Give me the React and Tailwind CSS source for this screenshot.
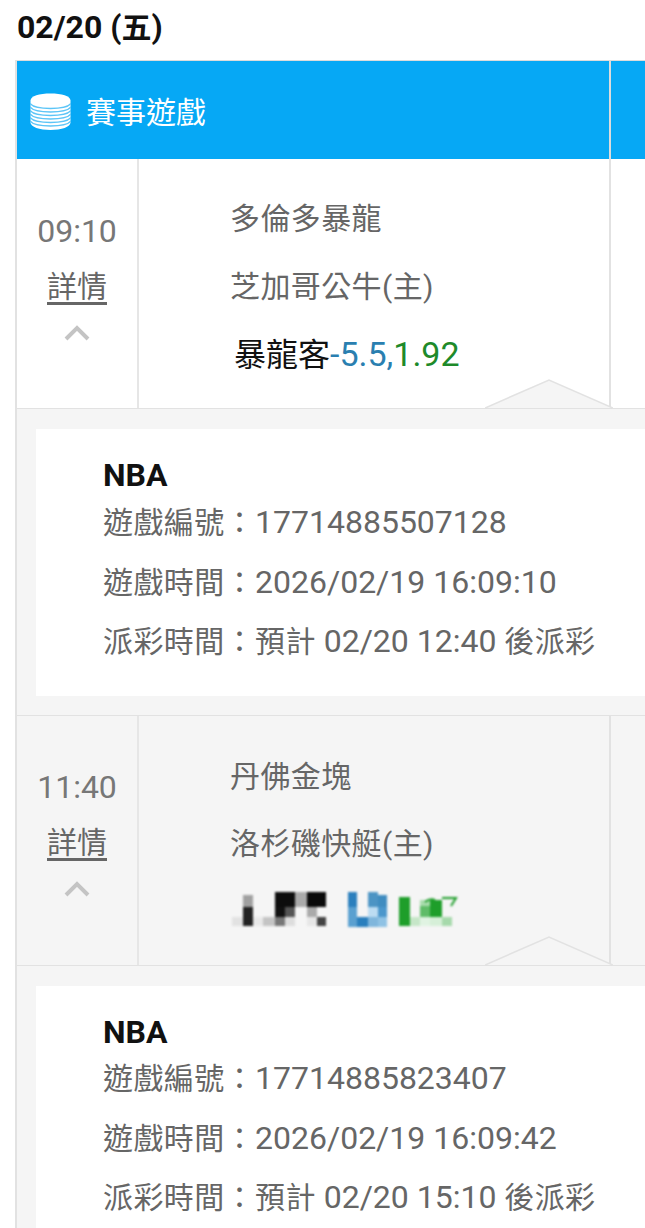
const Coins = () => (
  <svg width="41" height="38" viewBox="0 0 41 38" className="shrink-0">
    <path d="M0.500 7.500C0.500 3 9.500 0.500 20.500 0.500S40.500 3 40.500 7.500V29.500C40.500 34 31.500 37 20.500 37S0.500 34 0.500 29.500Z" fill="#fff" />
    <g fill="none" stroke="#5cc5f7" strokeWidth="1.300">
      <path d="M0 10.500c3 4 10 5 20.500 5s17.500-1 20.500-5" />
      <path d="M0 14c3 4 10 5 20.500 5s17.500-1 20.500-5" />
      <path d="M0 17.500c3 4 10 5 20.500 5s17.500-1 20.500-5" />
      <path d="M0 21c3 4 10 5 20.500 5s17.500-1 20.500-5" />
      <path d="M0 24.500c3 4 10 5 20.500 5s17.500-1 20.500-5" />
      <path d="M0 28c3 4 10 5 20.500 5s17.500-1 20.500-5" />
    </g>
  </svg>
);

const Chevron = () => (
  <svg width="28" height="18" viewBox="0 0 28 18" fill="none">
    <path d="M3 16 14 5l11 11" stroke="#c4c4c4" strokeWidth="4" />
  </svg>
);

const Notch = () => (
  <svg width="128" height="30" viewBox="0 0 128 30" className="absolute right-[-4px] bottom-[-1px]">
    <path d="M0 29 64 1l64 28" fill="#f5f5f5" stroke="#e2e2e2" strokeWidth="1.500" />
  </svg>
);

const L = ({ children }) => <span className="text-[32px] tracking-normal">{children}</span>;

const mosaic = [
  [243, 895, 10, 12, "#a0a0a0"], [243, 907, 10, 19, "#222"],
  [232, 917, 11, 9, "#e2e2e2"], [253, 917, 10, 9, "#e8e8e8"], [263, 917, 12, 9, "#c4c4c4"],
  [275, 892, 20, 15, "#0d0d0d"], [275, 907, 10, 10, "#111"], [285, 907, 10, 10, "#555"],
  [275, 917, 10, 9, "#777"], [285, 917, 10, 9, "#ddd"], [295, 892, 12, 15, "#aaa"],
  [307, 892, 19, 15, "#0a0a0a"], [307, 907, 10, 10, "#aaa"], [307, 917, 10, 9, "#e6e6e6"], [317, 917, 9, 9, "#444"],
  [348, 892, 9, 15, "#2a7fbd"], [348, 907, 9, 20, "#5aa0d0"], [357, 917, 11, 10, "#2a7fbd"],
  [368, 892, 10, 15, "#4c94c4"], [378, 895, 9, 12, "#3f8cc0"], [368, 907, 10, 10, "#bcdcf2"],
  [378, 907, 9, 10, "#4b97cc"], [368, 917, 10, 10, "#7fb6dc"], [378, 917, 9, 10, "#8fc2e4"],
  [399, 897, 11, 29, "#1e9e2a"], [410, 917, 10, 9, "#c6e6c8"],
  [420, 900, 10, 6, "#a8dcac"], [420, 906, 10, 11, "#5fbc68"], [430, 900, 12, 17, "#1e9e2a"],
  [420, 917, 10, 9, "#e0f3e2"], [430, 917, 12, 9, "#d6efd8"], [442, 917, 10, 9, "#a6d9ab"],
];

const BlurredBet = () => (
  <svg width="232" height="36" viewBox="230 891 232 36" className="block blur-[1px]">
    {mosaic.map(([x, y, w, h, c], i) => (
      <rect key={i} x={x} y={y} width={w} height={h} fill={c} />
    ))}
    <path d="M425 902q5-4 10-2" stroke="#1e9e2a" strokeWidth="2" fill="none" />
    <path d="M442 898h14l-5 8" stroke="#1e9e2a" strokeWidth="2" fill="none" />
  </svg>
);

function Game({ time, away, home, bet, id, when, pay, blurred, tone, timeTop, awayTop, homeGap, idGap }) {
  return (
    <div>
      <div className={`flex h-[250px] border-b border-[#e2e2e2] ${tone}`}>
        <div className="w-[122px] shrink-0 border-r-2 border-[#e6e6e6] flex flex-col items-center">
          <div className={`${timeTop} text-[30px] leading-[40px] text-[#777]`}><L>{time}</L></div>
          <div className="mt-[15px] text-[30px] leading-[40px] text-[#666] underline underline-offset-[5px]">詳情</div>
          <div className="mt-[16px] flex"><Chevron /></div>
        </div>
        <div className="relative w-[472px] shrink-0 border-r-2 border-[#e2e2e2]">
          <div className={`pl-[91px] ${awayTop} text-[30px] leading-[36px] text-[#666]`}>
            <div className="tracking-[0.4px]">{away}</div>
            <div className={`${homeGap} tracking-[0.4px]`}>{home}(主)</div>
            {blurred ? (
              <div className="mt-[29px]"><BlurredBet /></div>
            ) : (
              <div className="mt-[31px] ml-[4px] text-[32px] text-[#111]">
                {bet[0]}
                <span className="text-[34px] text-[#2a7fb0]">{bet[1]}</span>
                <span className="text-[34px] text-[#1e8a2a]">{bet[2]}</span>
              </div>
            )}
          </div>
          <Notch />
        </div>
        <div className="flex-1" />
      </div>
      <div className="h-[307px] bg-[#f5f5f5] pl-[19px] pt-[20px] border-b border-[#e2e2e2]">
        <div className="h-[267px] bg-white pl-[67px] pt-[28px] text-[30px] text-[#666] tracking-[0.4px]">
          <div className="font-bold text-[32px] text-[#111] leading-[36px] tracking-normal">NBA</div>
          <div className={`leading-[36px] ${idGap}`}>遊戲編號：<L>{id}</L></div>
          <div className="leading-[36px] mt-[23px]">遊戲時間：<L>{when}</L></div>
          <div className="leading-[36px] mt-[22px]">派彩時間：預計 <L>{pay}</L> 後派彩</div>
        </div>
      </div>
    </div>
  );
}

export default function App() {
  return (
    <div className="w-[645px] h-[1228px] overflow-hidden bg-white font-['Roboto','Noto_Sans_CJK_TC',sans-serif]">
      <div className="h-[60px] pl-[17px] pt-[9px] text-[30px] leading-[36px] font-bold text-[#111]"><span className="text-[32px]">02/20 (</span>五<span className="text-[32px]">)</span></div>
      <div className="ml-[15px] border-l-2 border-[#e2e2e2]">
        <div className="flex h-[99px] bg-[#06a8f5] border-t border-[#dcdcdc]">
          <div className="w-[594px] shrink-0 border-r-2 border-[#dcdcdc] flex items-center pl-[13px] pt-[4px] gap-[15px] text-[30px] text-white">
            <Coins />
            <span>賽事遊戲</span>
          </div>
        </div>
        <Game tone="bg-white" timeTop="pt-[52px]" awayTop="pt-[42px]" homeGap="mt-[32px]" idGap="mt-[11px]" time="09:10" away="多倫多暴龍" home="芝加哥公牛" bet={["暴龍客", "-5.5,", "1.92"]} id="17714885507128" when="2026/02/19 16:09:10" pay="02/20 12:40" />
        <Game tone="bg-[#f5f5f5]" blurred timeTop="pt-[51px]" awayTop="pt-[43px]" homeGap="mt-[31px]" idGap="mt-[10px]" time="11:40" away="丹佛金塊" home="洛杉磯快艇" id="17714885823407" when="2026/02/19 16:09:42" pay="02/20 15:10" />
      </div>
    </div>
  );
}
